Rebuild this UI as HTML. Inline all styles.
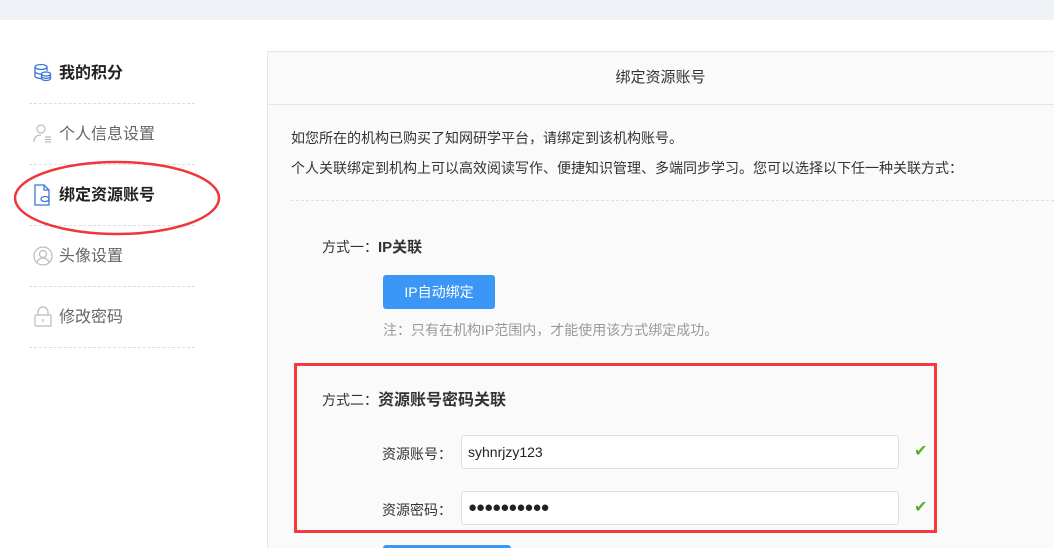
<!DOCTYPE html>
<html><head><meta charset="utf-8"><style>
html,body{margin:0;width:1054px;height:548px;overflow:hidden}
body{background:#fff;font-family:"Liberation Sans","Noto Sans CJK SC",sans-serif;position:relative;color:#333}
.a{position:absolute}
.top{left:0;top:0;width:1054px;height:20px;background:#eef2f6}
.nav{left:29px;width:166px;height:61px;border-bottom:1px dashed #ddd;font-size:16px;color:#666;box-sizing:border-box;padding-left:30px;line-height:61px}
.nav b{color:#222}
.panel{left:267px;top:51px;width:800px;height:520px;background:#fafafa;border:1px solid #e6e6e6}
.hd{left:267px;top:51px;width:787px;height:53px;border-bottom:1px solid #e6e6e6;text-align:center;line-height:53px;font-size:15px;color:#333}
.t{font-size:14px;color:#333}
.inp{left:461px;width:438px;height:34px;border:1px solid #ddd;border-radius:3px;background:#fff;box-sizing:border-box;padding-left:6px;line-height:32px;font-size:14px;color:#222}
.ck{color:#52b030;font-size:16px}
</style></head><body>
<div class="a top"></div>
<div class="a panel"></div>
<div class="a hd">绑定资源账号</div>
<div class="a nav" style="top:43px"><b>我的积分</b></div>
<div class="a nav" style="top:104px">个人信息设置</div>
<div class="a nav" style="top:165px"><b>绑定资源账号</b></div>
<div class="a nav" style="top:226px">头像设置</div>
<div class="a nav" style="top:287px">修改密码</div>
<svg class="a" style="left:33px;top:63px" width="20" height="20"><g fill="none" stroke="#3b78d8" stroke-width="1.3"><ellipse cx="8" cy="4" rx="6" ry="2.5"/><path d="M2 4v9c0 1.4 2.7 2.5 6 2.5M14 4v4M2 8.5c0 1.4 2.7 2.5 6 2.5"/><ellipse cx="13" cy="11" rx="4.5" ry="2"/><path d="M8.5 11v4.5c0 1.1 2 2 4.5 2s4.5-.9 4.5-2V11M8.5 13.3c0 1.1 2 2 4.5 2s4.5-.9 4.5-2"/></g></svg>
<svg class="a" style="left:33px;top:123px" width="20" height="20"><g fill="none" stroke="#bbb" stroke-width="1.2"><circle cx="8" cy="6" r="4"/><path d="M1 19c0-5 3-7 7-7"/><path d="M12 14h6M12 16.5h6M12 19h6"/></g></svg>
<svg class="a" style="left:33px;top:184px" width="20" height="22"><g fill="none" stroke="#3b78d8" stroke-width="1.3"><path d="M2 1h9l5 5v15H2z"/><path d="M11 1v5h5"/><ellipse cx="12" cy="15" rx="4" ry="2.5"/></g></svg>
<svg class="a" style="left:33px;top:246px" width="20" height="20"><g fill="none" stroke="#bbb" stroke-width="1.2"><circle cx="10" cy="10" r="9"/><circle cx="10" cy="8" r="3.5"/><path d="M4 16c1.5-3 3.5-4 6-4s4.5 1 6 4"/></g></svg>
<svg class="a" style="left:34px;top:306px" width="18" height="22"><g fill="none" stroke="#bbb" stroke-width="1.2"><path d="M4 9V6a5 5 0 0 1 10 0v3"/><rect x="1" y="9" width="16" height="11" rx="1"/><path d="M9 13v3"/></g></svg>
<svg class="a" style="left:14px;top:160px" width="210" height="80"><ellipse cx="103" cy="38" rx="102" ry="36" fill="none" stroke="#f0363a" stroke-width="2.5"/></svg>
<div class="a t" style="left:291px;top:128px">如您所在的机构已购买了知网研学平台，请绑定到该机构账号。</div>
<div class="a t" style="left:291px;top:158px">个人关联绑定到机构上可以高效阅读写作、便捷知识管理、多端同步学习。您可以选择以下任一种关联方式：</div>
<div class="a" style="left:291px;top:200px;width:763px;border-top:1px dashed #e0e0e0"></div>
<div class="a t" style="left:322px;top:236px">方式一：<span style="font-size:15px;font-weight:bold;color:#333">IP关联</span></div>
<div class="a" style="left:383px;top:275px;width:112px;height:34px;background:#3b97f5;border-radius:3px;color:#fff;font-size:14px;text-align:center;line-height:34px">IP自动绑定</div>
<div class="a" style="left:383px;top:320px;font-size:14px;color:#999">注：只有在机构IP范围内，才能使用该方式绑定成功。</div>
<div class="a t" style="left:322px;top:386px">方式二：<span style="font-size:16px;font-weight:bold;color:#333">资源账号密码关联</span></div>
<div class="a t" style="left:382px;top:444px">资源账号：</div>
<div class="a inp" style="top:435px">syhnrjzy123</div>
<div class="a ck" style="left:914px;top:441px">✔</div>
<div class="a t" style="left:382px;top:500px">资源密码：</div>
<div class="a inp" style="top:491px;font-size:15px;letter-spacing:-1px">●●●●●●●●●●</div>
<div class="a ck" style="left:914px;top:497px">✔</div>
<div class="a" style="left:294px;top:363px;width:643px;height:170px;border:3px solid #f53a3d;box-sizing:border-box"></div>
<div class="a" style="left:383px;top:545px;width:128px;height:10px;background:#3b97f5;border-radius:3px"></div>
</body></html>
